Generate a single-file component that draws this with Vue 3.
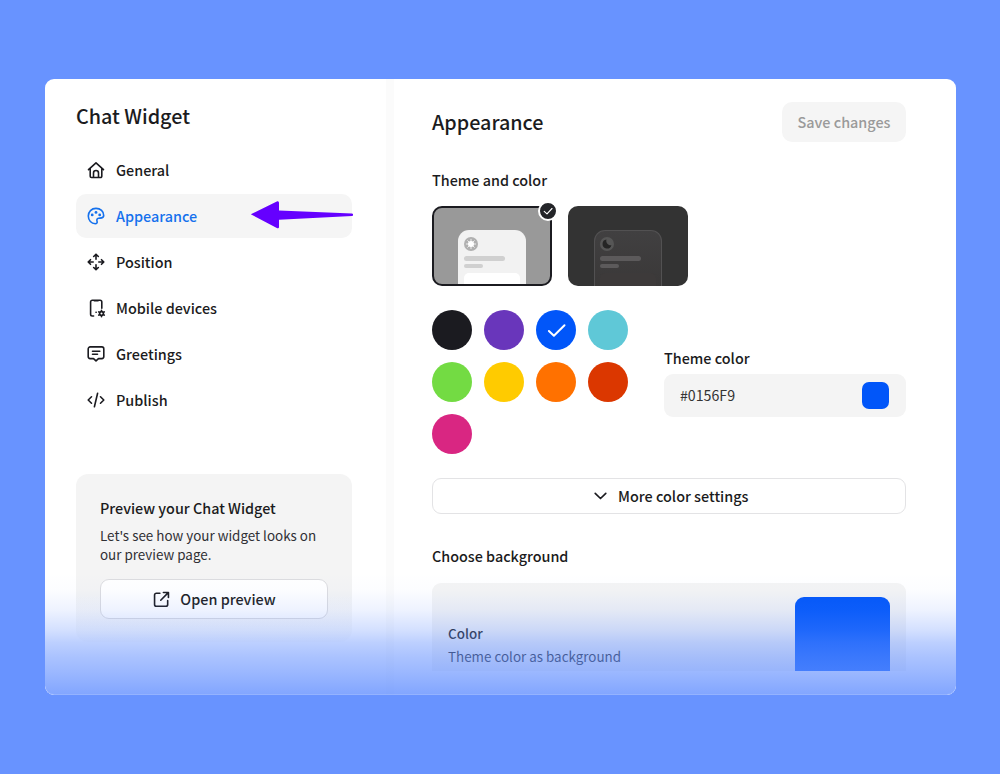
<script setup>
const nav = [
  { id: 'general', label: 'General' },
  { id: 'appearance', label: 'Appearance' },
  { id: 'position', label: 'Position' },
  { id: 'mobile', label: 'Mobile devices' },
  { id: 'greetings', label: 'Greetings' },
  { id: 'publish', label: 'Publish' },
]
const colors = ['#1b1b20', '#6936bb', '#0156f9', '#5fc8d7', '#73db43', '#ffcb00', '#ff7100', '#db3700', '#d92682']
const themes = ['light', 'dark']
</script>

<template>
  <main class="stage">
    <div class="window">
      <aside class="sidebar">
        <h1 class="title">Chat Widget</h1>
        <nav class="nav">
          <a v-for="item in nav" :key="item.id" class="item" :class="{ active: item.id === 'appearance' }">
            <svg class="icon" viewBox="0 0 20 20">
              <template v-if="item.id === 'general'">
                <path d="M2.500 9.600 10 2.800l7.500 6.800M4.200 8.300v8a1.200 1.200 0 0 0 1.200 1.200h9.200a1.200 1.200 0 0 0 1.200-1.200v-8" />
                <path d="M7.500 17.300v-4.300a2.500 2.500 0 0 1 5 0v4.300" />
              </template>
              <template v-else-if="item.id === 'appearance'">
                <path d="M10 2.400c-4.500 0-7.700 3.300-7.700 7.700s3.100 7.600 7 7.600c1.500 0 2.200-.9 1.800-2.100-.5-1.500-.4-3 1.400-3.300 2.300-.4 5.200.3 5.200-2.900C17.700 5.300 14.500 2.400 10 2.400Z" />
                <g class="solid"><circle cx="6.200" cy="8.900" r="1.400" /><circle cx="10" cy="6.400" r="1.400" /><circle cx="13.700" cy="8.900" r="1.400" /></g>
              </template>
              <template v-else-if="item.id === 'position'">
                <path d="M10 2.200v5M10 12.800v5M2.200 10h5M12.800 10h5M7.700 4.500 10 2.200l2.300 2.300M7.700 15.500l2.300 2.300 2.300-2.300M4.500 7.700 2.200 10l2.300 2.300M15.500 7.700l2.300 2.300-2.300 2.300" />
              </template>
              <template v-else-if="item.id === 'mobile'">
                <path d="M7.600 18H6.300A1.700 1.700 0 0 1 4.600 16.300V4A1.700 1.700 0 0 1 6.300 2.300h7.800A1.700 1.700 0 0 1 15.800 4v6.300M8.300 2.800h3.800" />
                <path d="M10 14.300h.2" />
                <circle cx="15.500" cy="15.500" r="1.900" />
                <path d="M15.500 12.300v1M15.500 17.700v1M12.700 13.900l1 .6M17.300 16.500l1 .6M12.700 17.100l1-.6M17.300 14.500l1-.6" />
              </template>
              <template v-else-if="item.id === 'greetings'">
                <path d="M4.200 2.900h11.600a2 2 0 0 1 2 2v7.700a2 2 0 0 1-2 2h-3.300L10 16.900l-2.500-2.300H4.200a2 2 0 0 1-2-2V4.900a2 2 0 0 1 2-2Z" />
                <path d="M6.500 7.300h7.300M6.500 10.300h5" />
              </template>
              <template v-else>
                <path d="M5.500 6.800 2.200 10l3.300 3.200M14.500 6.800l3.300 3.200-3.300 3.200M11.600 3.300 8.400 16.700" />
              </template>
            </svg>
            <span>{{ item.label }}</span>
            <svg v-if="item.id === 'appearance'" class="pointer" viewBox="0 0 103 28">
              <path d="M.8 13.200 27.300.300Q29 0 29 1.800V9.400L102 12.600a1 1 0 0 1 0 2.400L29 18.700V26q0 1.800-1.700 1.200Z" />
            </svg>
          </a>
        </nav>
        <section class="preview">
          <h2>Preview your Chat Widget</h2>
          <p>Let's see how your widget looks on<br />our preview page.</p>
          <button class="open">
            <svg class="icon" viewBox="0 0 20 20"><path d="M8.300 3.400H4.600a1.900 1.900 0 0 0-1.900 1.900v9.900a1.900 1.900 0 0 0 1.900 1.900h10a1.900 1.900 0 0 0 1.900-1.900v-4M12 2.600h5.300v5.300M17.100 2.800l-7.900 8" /></svg>
            Open preview
          </button>
        </section>
      </aside>

      <section class="content">
        <header class="head">
          <h1>Appearance</h1>
          <button class="save">Save changes</button>
        </header>
        <h2 class="label">Theme and color</h2>
        <div class="themes">
          <div v-for="t in themes" :key="t" class="theme" :class="t">
            <div class="mock">
              <svg class="avatar" viewBox="0 0 14 14">
                <circle class="disc" cx="7" cy="7" r="7" />
                <template v-if="t === 'light'">
                  <circle class="mark" cx="7" cy="7" r="3" />
                  <path class="rays" d="M7 2.300v9.400M2.300 7h9.400M3.700 3.700l6.600 6.600M10.300 3.700l-6.600 6.600" />
                </template>
                <path v-else class="moon" d="M6.500 2.600A4.500 4.500 0 1 0 11.400 8.200 4.300 4.300 0 0 1 6.500 2.600Z" />
              </svg>
              <i class="line long"></i>
              <i class="line short"></i>
              <i class="box"></i>
            </div>
            <span v-if="t === 'light'" class="badge">
              <svg viewBox="0 0 16 16"><path d="M4.200 8.300 7 10.800l5-5.300" /></svg>
            </span>
          </div>
        </div>
        <div class="picker">
          <div class="dots">
            <span v-for="c in colors" :key="c" class="dot" :style="{ background: c }">
              <svg v-if="c === '#0156f9'" viewBox="0 0 40 40"><path d="m12.900 21 5 4.800L28.500 15.300" /></svg>
            </span>
          </div>
          <div class="field">
            <h2 class="label">Theme color</h2>
            <div class="input"><span>#0156F9</span><i></i></div>
          </div>
        </div>
        <button class="more">
          <svg viewBox="0 0 14 8"><path d="m1.300 1.200 5.700 5.500 5.700-5.500" /></svg>
          More color settings
        </button>
        <h2 class="label">Choose background</h2>
        <div class="background">
          <div class="copy">
            <strong>Color</strong>
            <span>Theme color as background</span>
          </div>
          <i class="swatch"></i>
        </div>
      </section>
      <div class="fade"></div>
    </div>
  </main>
</template>

<style>
body { margin: 0; overflow: hidden; }
</style>

<style scoped>
* { box-sizing: border-box; }
.stage {
  width: 1000px; height: 774px; padding: 78.500px 44.500px 0; background: #6893ff; color: #1b1b20;
  font-family: "Noto Sans CJK SC", "Noto Sans", sans-serif; font-size: 14.4px; font-weight: 500; line-height: 20px;
}
.window { position: relative; display: flex; width: 911px; height: 616.500px; overflow: hidden; border-radius: 9px; background: #fff; }
h1, h2, p { margin: 0; font-weight: 500; white-space: nowrap; }
h1 { font-size: 19.750px; line-height: 28px; }
h2 { font-size: 14.370px; line-height: 20px; }
button { display: flex; align-items: center; justify-content: center; padding: 0; border: 0; font: inherit; color: inherit; white-space: nowrap; }
svg { fill: none; stroke: currentColor; stroke-linecap: round; stroke-linejoin: round; }
.icon { flex: none; width: 20px; height: 20px; stroke-width: 1.6; }
.icon .solid { fill: currentColor; stroke: none; }
.sidebar { width: 341.500px; padding: 23.500px 34px 0 31.500px; }
.nav { display: grid; gap: 2px; margin-top: 18px; }
.item { position: relative; display: flex; align-items: center; gap: 10px; height: 44px; padding-left: 10px; border-radius: 10px; white-space: nowrap; }
.item.active { background: #f5f5f5; color: #1571ed; }
.pointer { position: absolute; left: 174px; top: 6.500px; width: 103px; height: 28px; fill: #6500ff; stroke: none; }
.preview { height: 168px; margin-top: 52px; padding: 24px; border-radius: 12px; background: linear-gradient(#f4f4f4 72%, rgba(244, 244, 244, .25)); }
.preview p { margin-top: 8px; font-size: 13.420px; font-weight: 400; line-height: 19px; color: #303034; }
.open { width: 228px; height: 40px; margin-top: 15px; gap: 9px; border: 1px solid #dcdcdf; border-radius: 9px; background: #fff; }
.open .icon { width: 19px; height: 19px; stroke-width: 1.700; }
.content { flex: 1; padding: 23.500px 50px 0 38px; border-left: 8px solid #fbfbfb; }
.head { display: flex; align-items: center; justify-content: space-between; height: 40px; }
.save { width: 124px; height: 40px; border-radius: 10px; background: #f5f5f5; color: #9a9a9a; }
.head + .label { margin-top: 28px; }
.themes { display: flex; gap: 16px; margin-top: 16px; }
.theme { position: relative; width: 120px; height: 80px; padding: 24px 0 0 26px; border-radius: 10px; background: #333; }
.theme.light { padding: 22px 0 0 24px; border: 2px solid #1b1b20; background: #999; }
.mock { display: flex; flex-direction: column; align-items: flex-start; width: 68px; height: 56px; padding: 7px 6px 0; border-radius: 11px 11px 0 0; background: #f2f2f2; overflow: hidden; }
.light .mock { height: 54px; }
.dark .mock { padding: 6px 5px 0; border: 1px solid #525152; border-bottom: 0; background: linear-gradient(#414041, #3a3838); }
.avatar { width: 14px; height: 14px; flex: none; }
.disc { fill: #b0b0b0; stroke: none; }
.dark .disc { fill: #565656; }
.mark { fill: #fff; stroke: none; }
.rays { stroke: #fff; stroke-width: .8; }
.moon { fill: #252525; stroke: none; }
.line { flex: none; height: 4.500px; margin-top: 5px; border-radius: 3px; background: #d0d0d0; }
.dark .line { background: #5c5a5b; }
.long { width: 41px; }
.short { width: 19px; margin-top: 3px; }
.box { width: 56px; height: 20px; flex: none; margin-top: 5px; border-radius: 5px; background: #fff; }
.dark .box { background: #3d3a3a; }
.badge { position: absolute; top: -7.500px; right: -8px; width: 20px; height: 20px; border: 2px solid #fff; border-radius: 50%; background: #242529; color: #fff; }
.badge svg { display: block; width: 16px; height: 16px; stroke-width: 1.100; }
.picker { display: flex; justify-content: space-between; align-items: center; height: 144px; margin-top: 24px; }
.dots { display: grid; grid-template-columns: repeat(4, 40px); gap: 12px; }
.dot { height: 40px; border-radius: 50%; color: #fff; }
.dot svg { display: block; stroke-width: 2; }
.field { width: 242px; }
.input { display: flex; align-items: center; justify-content: space-between; height: 43px; margin-top: 6px; padding: 0 17px 0 16px; border-radius: 9px; background: #f4f4f4; font-size: 14.200px; font-weight: 400; color: #333; }
.input i { width: 27px; height: 27px; border-radius: 7px; background: #0156f9; }
.more { width: 474px; height: 36px; margin-top: 24px; padding-left: 4px; gap: 11.500px; border: 1px solid #e3e3e5; border-radius: 9px; background: #fff; }
.more svg { width: 13px; height: 8px; stroke-width: 1.800; }
.more + .label { margin-top: 32px; }
.background { display: flex; justify-content: space-between; height: 88.500px; margin-top: 16.500px; padding: 14px 16px 0; border-radius: 9px 9px 0 0; background: #f4f4f4; }
.copy { display: flex; flex-direction: column; gap: 3px; padding-top: 26px; font-size: 13.420px; font-weight: 400; }
.copy strong { font-weight: 500; }
.swatch { width: 95px; height: 74.500px; border-radius: 9px 9px 0 0; background: #0156f9; }
.fade {
  position: absolute; left: 0; right: 0; bottom: 0; height: 122px; border-radius: 0 0 9px 9px;
  box-shadow: inset 0 -1px rgba(255, 255, 255, .15);
  background: linear-gradient(rgba(104, 147, 255, 0), rgba(104, 147, 255, .02) 14%, rgba(104, 147, 255, .11) 30%, rgba(104, 147, 255, .29) 47%, rgba(104, 147, 255, .44) 57%, rgba(104, 147, 255, .56) 69%, rgba(104, 147, 255, .65) 80%, rgba(104, 147, 255, .83));
}
</style>
